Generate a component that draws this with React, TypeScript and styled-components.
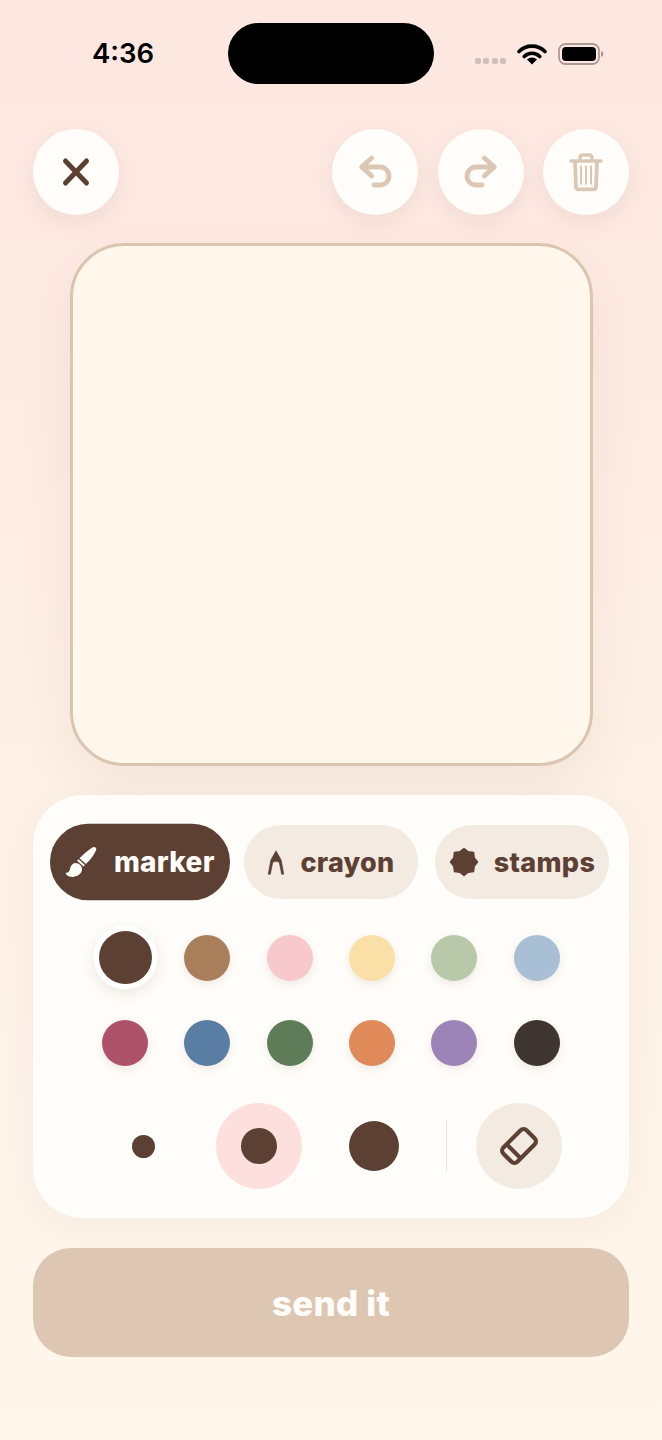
import React from "react";
import styled, { createGlobalStyle } from "styled-components";

const Global = createGlobalStyle`
  html, body { margin: 0; padding: 0; }
  body { font-family: Inter, "Liberation Sans", sans-serif; }
  * { box-sizing: border-box; }
`;

const Screen = styled.div`
  position: relative;
  width: 662px;
  height: 1440px;
  overflow: hidden;
  background: linear-gradient(180deg, #fde8e1 0%, #fdeae2 20%, #fef1e6 55%, #fff7ec 100%);
  display: flex;
  flex-direction: column;
`;

const StatusBar = styled.div`
  height: 129px;
  flex: none;
  padding: 0 58px 0 92px;
  display: flex;
  align-items: flex-start;
  justify-content: space-between;
`;

const Time = styled.div`
  margin-top: 36px;
  font-size: 27.5px;
  line-height: 35px;
  font-weight: 600;
  color: #000;
`;

const Island = styled.div`
  position: absolute;
  left: 228px;
  top: 23px;
  width: 206px;
  height: 61px;
  border-radius: 31px;
  background: #000;
`;

const StatusIcons = styled.div`
  margin-top: 42px;
  display: flex;
  align-items: flex-start;
  gap: 11px;
`;

const SignalDots = styled.div`
  display: flex;
  gap: 2.5px;
  margin-top: 16px;
`;

const SignalDot = styled.span`
  width: 6px;
  height: 6px;
  border-radius: 2px;
  background: #cfc0b9;
`;

const Toolbar = styled.div`
  flex: none;
  padding: 0 33px;
  display: flex;
  justify-content: space-between;
`;

const ToolGroup = styled.div`
  display: flex;
  gap: 19.5px;
`;

const RoundButton = styled.button`
  width: 86px;
  height: 86px;
  padding: 0;
  border: 0;
  border-radius: 50%;
  background: #fffdf9;
  box-shadow: 0 8px 22px rgba(93, 64, 55, 0.08);
  display: flex;
  align-items: center;
  justify-content: center;
`;

const Canvas = styled.div`
  flex: none;
  width: 523px;
  height: 523px;
  margin: 28px 0 0 69.5px;
  border: 3px solid #dcc5b0;
  border-radius: 54px;
  background: #fff7ec;
  box-shadow: 0 22px 55px rgba(93, 64, 55, 0.07);
`;

const Panel = styled.div`
  flex: none;
  margin: 29px 33px 0;
  padding: 30px 20px 29px;
  border-radius: 50px;
  background: #fffdf9;
  box-shadow: 0 10px 36px rgba(93, 64, 55, 0.05);
`;

const Tabs = styled.div`
  display: flex;
  gap: 17px;
`;

const Tab = styled.button<{ $active?: boolean }>`
  width: 174px;
  height: 74px;
  padding: 0;
  border: 0;
  border-radius: 37px;
  background: ${(p) => (p.$active ? "#5c4033" : "#f3eae2")};
  color: ${(p) => (p.$active ? "#fffdf9" : "#5c4033")};
  font-family: Inter, "Liberation Sans", sans-serif;
  font-size: 27px;
  font-weight: 800;
  letter-spacing: 0.3px;
  transform: ${(p) => (p.$active ? "scale(1.035)" : "none")};
  display: flex;
  align-items: center;
  justify-content: center;
  gap: ${(p) => (p.$active ? 16 : 15)}px;
`;

const Swatches = styled.div`
  margin: 16px auto 0;
  width: 494px;
  display: grid;
  grid-template-columns: repeat(6, 1fr);
  grid-auto-rows: 85px;
  place-items: center;
`;

const Swatch = styled.div<{ $color: string; $selected?: boolean }>`
  width: ${(p) => (p.$selected ? 53 : 46)}px;
  height: ${(p) => (p.$selected ? 53 : 46)}px;
  border-radius: 50%;
  background: ${(p) => p.$color};
  box-shadow: ${(p) =>
    p.$selected
      ? "0 0 0 5.5px #fff, 0 4px 14px 5px rgba(93, 64, 55, 0.12)"
      : "0 3px 8px rgba(93, 64, 55, 0.1)"};
`;

const SizeRow = styled.div`
  margin-top: 18px;
  display: flex;
  justify-content: center;
  align-items: center;
  gap: 29px;
`;

const SizeOption = styled.div<{ $active?: boolean }>`
  width: 86px;
  height: 86px;
  border-radius: 50%;
  background: ${(p) => (p.$active ? "#fde0de" : "transparent")};
  display: flex;
  align-items: center;
  justify-content: center;
`;

const SizeDot = styled.div<{ $size: number }>`
  width: ${(p) => p.$size}px;
  height: ${(p) => p.$size}px;
  border-radius: 50%;
  background: #5c4033;
`;

const Divider = styled.div`
  width: 1px;
  height: 52px;
  background: #eae2da;
`;

const EraserButton = styled(RoundButton)`
  background: #f3eae2;
  box-shadow: none;
`;

const SendButton = styled.button`
  flex: none;
  margin: 30px 33px 0;
  height: 109px;
  border: 0;
  border-radius: 38px;
  background: #dec7b2;
  color: #fffdf9;
  font-family: Inter, "Liberation Sans", sans-serif;
  font-size: 35px;
  font-weight: 800;
  letter-spacing: 0.2px;
`;

const WifiIcon = () => (
  <svg width="30" height="22" viewBox="0 0 30 22" style={{ marginTop: 1 }}>
    <path d="M2 8.5a18.5 18.5 0 0 1 26 0" fill="none" stroke="#000" strokeWidth="3.6" strokeLinecap="round" />
    <path d="M7.2 13.5a11 11 0 0 1 15.6 0" fill="none" stroke="#000" strokeWidth="3.6" strokeLinecap="round" />
    <path d="M15 21.5l-5-5a7 7 0 0 1 10 0z" fill="#000" />
  </svg>
);

const BatteryIcon = () => (
  <svg width="46" height="24" viewBox="0 0 46 24">
    <rect x="1" y="2" width="40" height="20" rx="6.5" fill="none" stroke="#a99b93" strokeWidth="1.8" />
    <rect x="4" y="5" width="34" height="14" rx="4" fill="#000" />
    <path d="M43 9c1.6.5 2.4 1.6 2.4 3s-.8 2.5-2.4 3z" fill="#a99b93" />
  </svg>
);

const CloseIcon = () => (
  <svg width="32" height="32" viewBox="0 0 32 32">
    <path d="M5.500 5l21 22M26.500 5l-21 22" fill="none" stroke="#5c4033" strokeWidth="5" strokeLinecap="round" />
  </svg>
);

const UndoIcon = ({ flip }: { flip?: boolean }) => (
  <svg width="36" height="36" viewBox="0 0 36 36" style={flip ? { transform: "scaleX(-1)" } : undefined}>
    <path
      d="M14.700 4L4.700 13l10 9M4.700 13H23a9 9 0 0 1 0 18h-6"
      fill="none"
      stroke="#dcc7b5"
      strokeWidth="4.800"
      strokeLinecap="round"
      strokeLinejoin="round"
    />
  </svg>
);

const TrashIcon = () => (
  <svg width="34" height="40" viewBox="0 0 34 40">
    <path d="M2 9h30M11 8V5.500A2.500 2.500 0 0 1 13.500 3h7A2.500 2.500 0 0 1 23 5.500V8" fill="none" stroke="#dcc7b5" strokeWidth="3.400" strokeLinecap="round" />
    <path d="M6 10l1 25a2.500 2.500 0 0 0 2.500 2.400h15A2.500 2.500 0 0 0 27 35l1-25" fill="none" stroke="#dcc7b5" strokeWidth="3.800" strokeLinejoin="round" />
    <path d="M12 13.500v19M17 13.500v19M22 13.500v19" fill="none" stroke="#dcc7b5" strokeWidth="2" />
  </svg>
);

const BrushIcon = () => (
  <svg width="31" height="30" viewBox="0 0 31 30" fill="#fffdf9">
    <path d="M26 1c2-1.400 4.500.3 3.700 2.500-2 4.500-5.500 9.500-10 13.500l-6.200-5.600C17.500 7.500 22 3.500 26 1z" />
    <path d="M12.600 12.300l6.200 5.600-1.400 1.500-6.200-5.600z" />
    <path d="M9.500 16c3.500 0 7 3 6.500 6.500-.5 4.500-6 7.500-11 6.800C2.500 29 .5 27.500 0 25.500c2.500 0 3.800-1.200 4.300-3.500.6-3 2.400-6 5.200-6z" />
  </svg>
);

const CrayonIcon = () => (
  <svg width="18" height="25" viewBox="0 0 18 25">
    <path
      d="M9 .8L3.800 10 1.200 24.200h2.200L5.700 12.500Q9 10 12.300 12.500l2.300 11.700h2.200L14.200 10z"
      fill="#5c4033"
      stroke="#5c4033"
      strokeWidth=".6"
      strokeLinejoin="round"
    />
  </svg>
);

const StampIcon = () => (
  <svg width="30" height="30" viewBox="0 0 30 30">
    <path
      d="M15 1.500L19.200 4.840 24.550 5.450 25.160 10.800 28.500 15 25.160 19.200 24.550 24.550 19.200 25.160 15 28.500 10.800 25.160 5.450 24.550 4.840 19.200 1.500 15 4.840 10.800 5.450 5.450 10.800 4.840z"
      fill="#5c4033"
      stroke="#5c4033"
      strokeWidth="1.500"
      strokeLinejoin="round"
    />
  </svg>
);

const EraserIcon = () => (
  <svg width="42" height="42" viewBox="0 0 42 42" fill="none" stroke="#5c4033" strokeWidth="4.200">
    <g transform="rotate(-45 21 21)">
      <rect x="4.500" y="11" width="33" height="20" rx="4.500" />
      <path d="M13.500 11v20" />
    </g>
  </svg>
);

const row1 = ["#5c4033", "#a97f5b", "#f7c8cc", "#fae0a6", "#b8c9a9", "#a8bfd6"];
const row2 = ["#ad5269", "#5a7ea3", "#5e7c58", "#e08a5a", "#9c83b8", "#3e3430"];

export default function App() {
  return (
    <Screen>
      <Global />
      <StatusBar>
        <Time>4:36</Time>
        <StatusIcons>
          <SignalDots>
            <SignalDot />
            <SignalDot />
            <SignalDot />
            <SignalDot />
          </SignalDots>
          <WifiIcon />
          <BatteryIcon />
        </StatusIcons>
      </StatusBar>
      <Island />
      <Toolbar>
        <RoundButton aria-label="close">
          <CloseIcon />
        </RoundButton>
        <ToolGroup>
          <RoundButton aria-label="undo">
            <UndoIcon />
          </RoundButton>
          <RoundButton aria-label="redo">
            <UndoIcon flip />
          </RoundButton>
          <RoundButton aria-label="delete">
            <TrashIcon />
          </RoundButton>
        </ToolGroup>
      </Toolbar>
      <Canvas />
      <Panel>
        <Tabs>
          <Tab $active>
            <BrushIcon />
            marker
          </Tab>
          <Tab>
            <CrayonIcon />
            crayon
          </Tab>
          <Tab>
            <StampIcon />
            stamps
          </Tab>
        </Tabs>
        <Swatches>
          {row1.map((c, i) => (
            <Swatch key={c} $color={c} $selected={i === 0} />
          ))}
          {row2.map((c) => (
            <Swatch key={c} $color={c} />
          ))}
        </Swatches>
        <SizeRow>
          <SizeOption>
            <SizeDot $size={23} />
          </SizeOption>
          <SizeOption $active>
            <SizeDot $size={36} />
          </SizeOption>
          <SizeOption>
            <SizeDot $size={50} />
          </SizeOption>
          <Divider />
          <EraserButton aria-label="eraser">
            <EraserIcon />
          </EraserButton>
        </SizeRow>
      </Panel>
      <SendButton>send it</SendButton>
    </Screen>
  );
}
